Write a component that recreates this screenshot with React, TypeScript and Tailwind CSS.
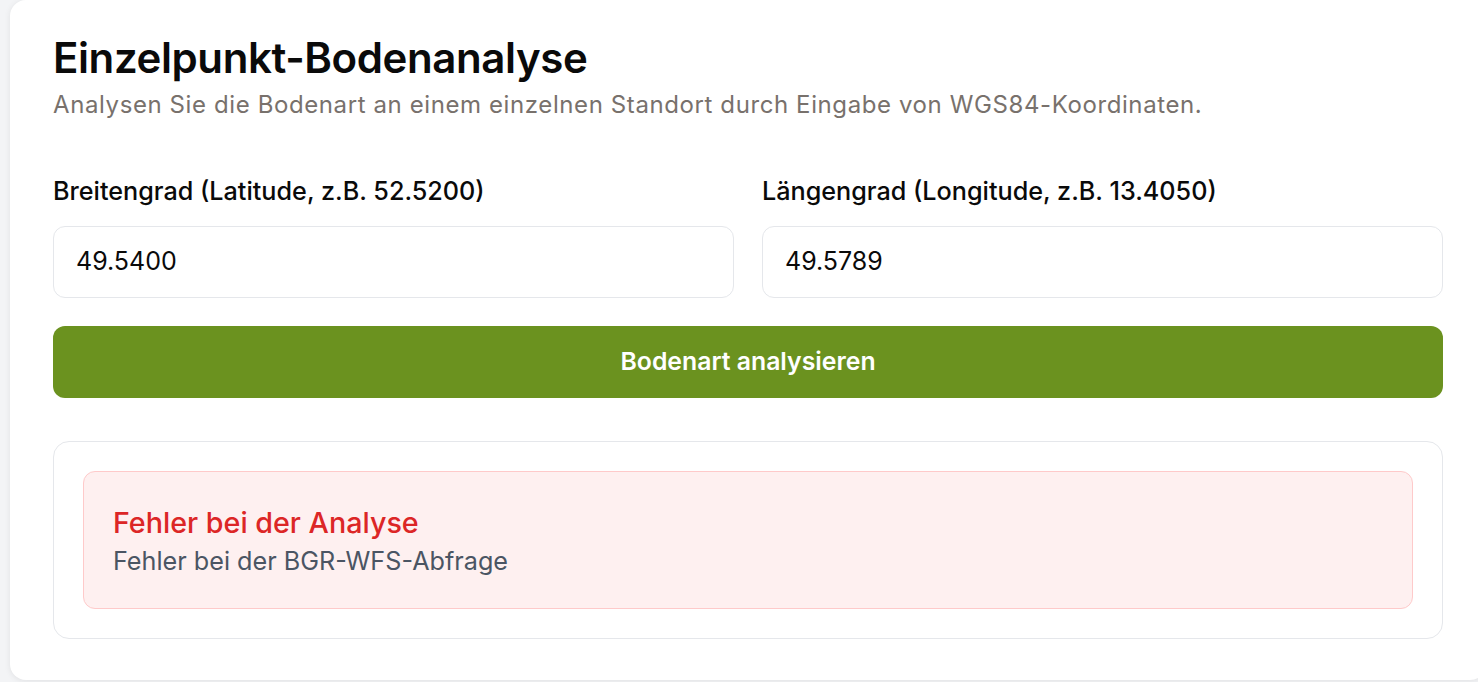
import React from "react";

export default function App() {
  return (
    <div className="w-[1478px] h-[682px] overflow-hidden bg-[#f3f4f6] relative" style={{ fontFamily: "Inter, 'Noto Sans', sans-serif" }}>
      <div className="ml-[10px] w-[1476px] h-[680px] bg-white rounded-b-2xl rounded-tl-2xl shadow-[0_1px_6px_rgba(0,0,0,0.08)] pl-[43px] pr-[33px] pt-[30px]">
        <h1 className="text-[42px] leading-[56px] font-semibold text-[#0a0a0a] tracking-[-0.4px]">Einzelpunkt-Bodenanalyse</h1>
        <p className="text-[24px] leading-[34px] text-[#78716c] mt-[2px] tracking-[0.6px]">
          Analysen Sie die Bodenart an einem einzelnen Standort durch Eingabe von WGS84-Koordinaten.
        </p>
        <div className="grid grid-cols-2 gap-[28px] mt-[52px] w-[1390px]">
          <div className="flex flex-col">
            <label className="text-[25.2px] leading-[34px] font-medium text-[#0a0a0a]">Breitengrad (Latitude, z.B. 52.5200)</label>
            <div className="mt-[18px] h-[72px] rounded-xl border border-[#e5e7eb] flex items-center px-[22px] text-[25px] text-[#0a0a0a]">49.5400</div>
          </div>
          <div className="flex flex-col">
            <label className="text-[25.2px] leading-[34px] font-medium text-[#0a0a0a]">Längengrad (Longitude, z.B. 13.4050)</label>
            <div className="mt-[18px] h-[72px] rounded-xl border border-[#e5e7eb] flex items-center px-[22px] text-[25px] text-[#0a0a0a]">49.5789</div>
          </div>
        </div>
        <button className="mt-[28px] w-[1390px] h-[72px] rounded-xl bg-[#6b921f] text-white text-[24.8px] font-semibold flex items-center justify-center">
          Bodenart analysieren
        </button>
        <div className="mt-[43px] w-[1390px] rounded-2xl border border-[#e5e7eb] p-[29px]">
          <div className="rounded-xl border border-[#fecaca] bg-[#fef0f0] px-[29px] pt-[33px] pb-[27px]">
            <div className="text-[28.7px] leading-[36px] font-medium text-[#dc2626]">Fehler bei der Analyse</div>
            <div className="text-[25.2px] leading-[40px] text-[#4b5563]">Fehler bei der BGR-WFS-Abfrage</div>
          </div>
        </div>
      </div>
    </div>
  );
}
